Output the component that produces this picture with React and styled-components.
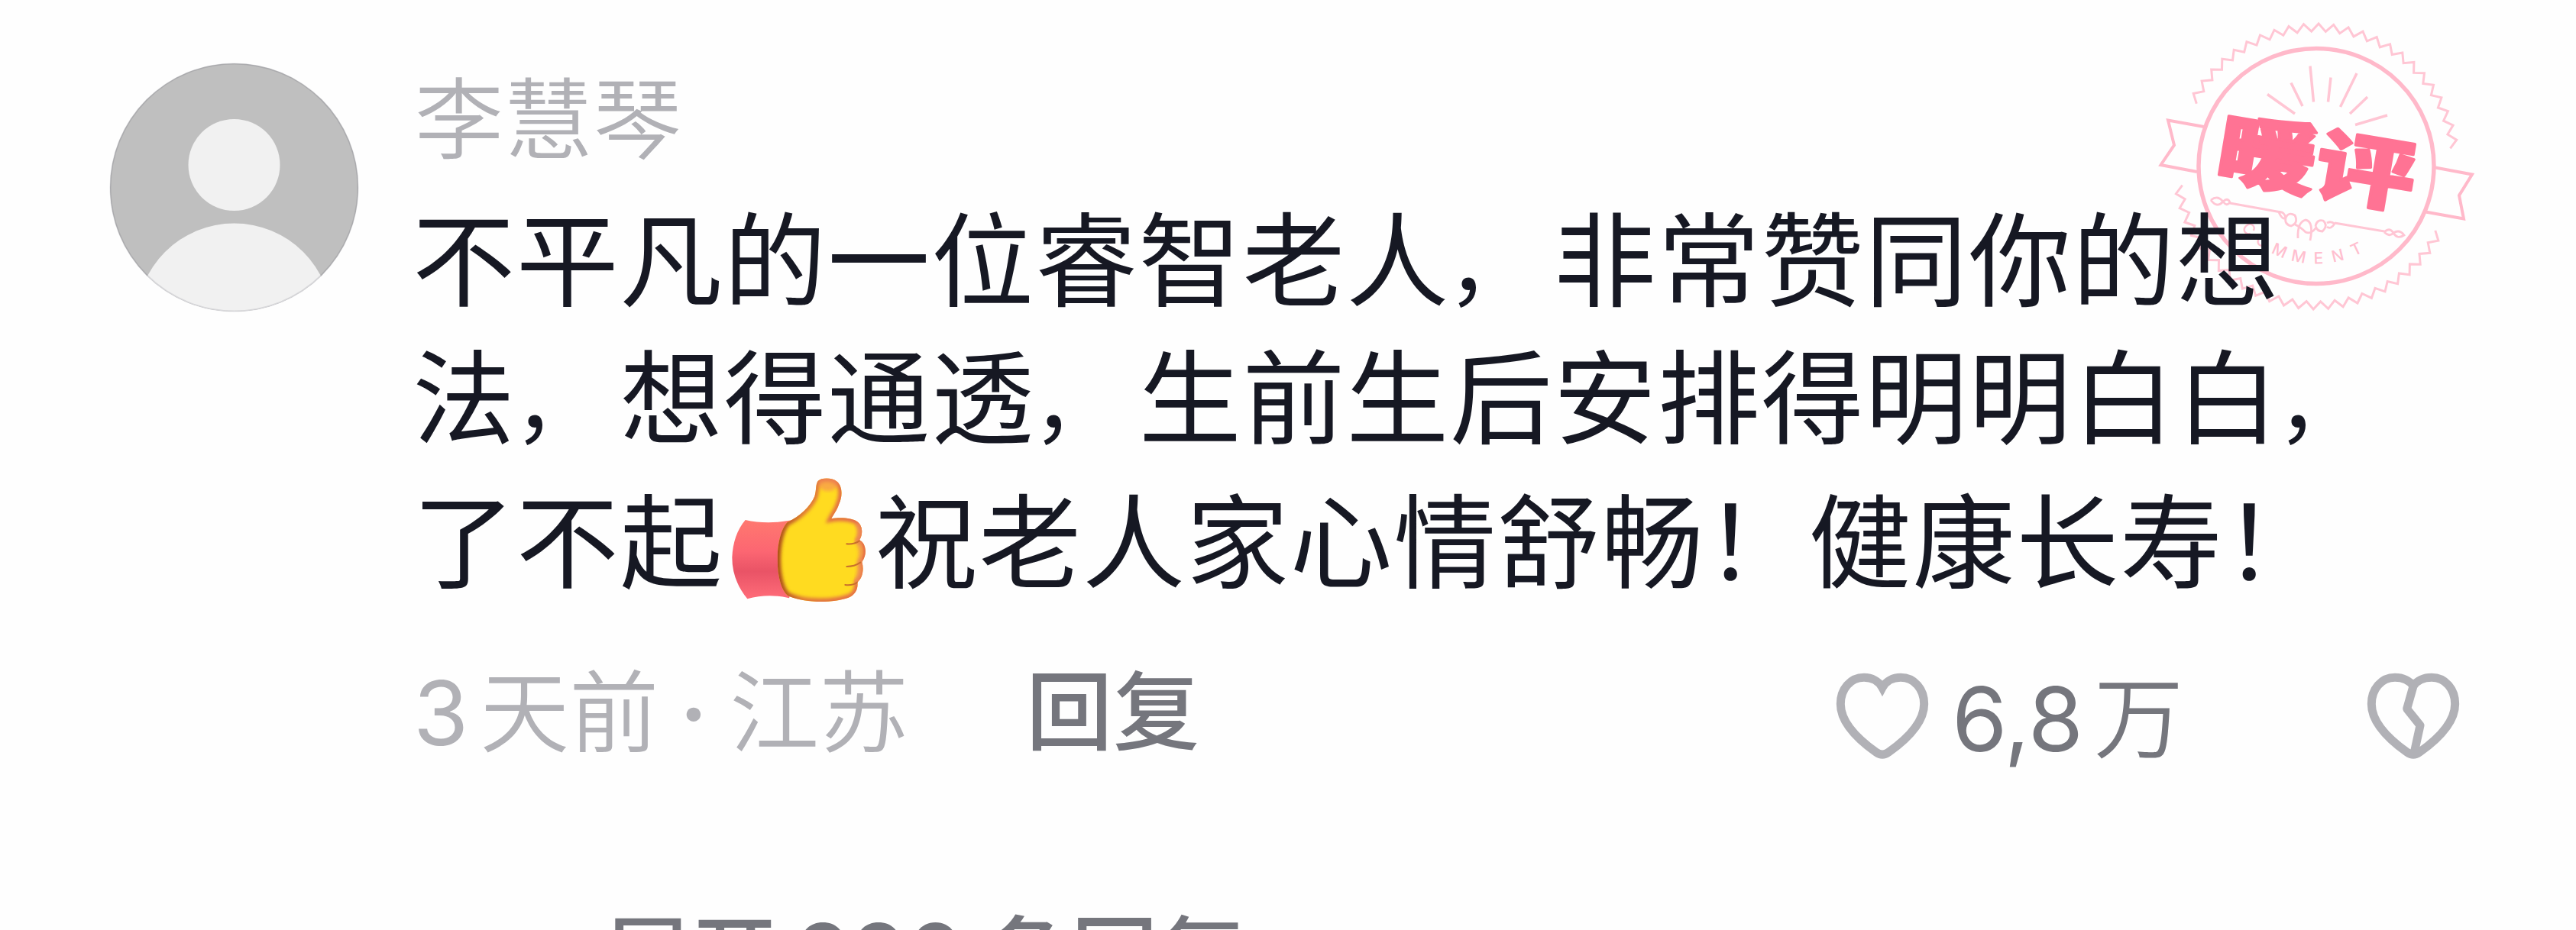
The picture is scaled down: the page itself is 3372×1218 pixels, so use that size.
import React from 'react';
import styled, { createGlobalStyle } from 'styled-components';

const GlobalStyle = createGlobalStyle`
  * { box-sizing: border-box; margin: 0; padding: 0; }
  body {
    background: #fefefe;
    overflow: hidden;
    font-family: Inter, 'Noto Sans CJK SC', sans-serif;
  }
`;

const Page = styled.main`
  position: relative;
  width: 3372px;
  height: 1218px;
  padding: 0 149px 0 143px;
  overflow: hidden;
`;

const Comment = styled.article`
  display: flex;
  gap: 70px;
`;

const Avatar = styled.svg`
  flex-shrink: 0;
  width: 327px;
  height: 327px;
  margin-top: 82px;
`;

const Content = styled.div`
  position: relative;
  flex: 1;
  padding-top: 92px;
`;

const UserName = styled.h3`
  padding-left: 3px;
  font-weight: 350;
  font-size: 116px;
  line-height: 130px;
  letter-spacing: 0.8px;
  color: #b1b1b6;
`;

const Message = styled.div`
  margin-top: 30px;
  color: #161823;
  font-size: 134px;
  font-weight: 400;
  letter-spacing: 1.8px;
`;

const Line = styled.p`
  display: flex;
  height: ${(p) => (p.$emoji ? 198 : 180)}px;
  line-height: ${(p) => (p.$emoji ? 198 : 180)}px;
  white-space: nowrap;
`;

const Comma = styled.span`
  transform: translateX(-4px) scale(0.86);
  transform-origin: 0 75%;
`;

const Thumb = styled.svg`
  width: 198px;
  height: 190px;
  margin-top: -1px;
`;

const Footer = styled.footer`
  display: flex;
  justify-content: space-between;
  margin-top: 59px;
  padding-left: 1px;
  font-size: 117px;
  line-height: 130px;
  white-space: nowrap;
`;

const Meta = styled.div`
  display: flex;
  font-weight: 350;
  color: #b1b1b6;
`;

const Num = styled.span`
  font-weight: 400;
`;

const Gap = styled.span`
  margin-left: ${(p) => p.$w}px;
`;

const Dot = styled.span`
  width: 34px;
  margin: 0 32px 0 27px;
  text-align: center;
  font-weight: 600;
`;

const ReplyBtn = styled.button`
  align-self: flex-start;
  margin-left: 154px;
  border: none;
  background: none;
  font: inherit;
  font-size: 113px;
  font-weight: 500;
  line-height: 126px;
  letter-spacing: 1px;
  color: #75767d;
`;

const Actions = styled.div`
  display: flex;
  align-items: center;
  height: 130px;
  margin-top: 8px;
`;

const HeartIcon = styled.svg`
  width: 128px;
  height: 128px;
  fill: none;
  stroke: #b1b1b6;
  stroke-width: 33;
`;

const Count = styled.span`
  display: flex;
  width: 567px;
  padding-left: 27px;
  font-weight: 350;
  color: #75767d;
`;

const Expand = styled.div`
  display: flex;
  margin: 180px 0 0 647px;
  font-size: 113px;
  font-weight: 500;
  line-height: 130px;
  letter-spacing: 2px;
  color: #75767d;
  white-space: nowrap;
`;

const ExpandNum = styled.span`
  margin: 0 25px 0 21px;
  font-size: 118px;
  letter-spacing: 0;
`;

// the stamp lies under the comment text
const StampBox = styled.svg`
  position: absolute;
  top: 10px;
  left: 2800px;
  width: 460px;
  height: 420px;
`;

const StampTitle = styled.text`
  font-size: 128px;
  font-weight: 900;
  fill: #ff7394;
  stroke: #ff7394;
  stroke-width: 4;
  stroke-linejoin: round;
`;

const StampLetter = styled.text`
  font-size: 21px;
  font-weight: 500;
  fill: #ffbfcf;
`;

// zigzag arc made of teeth between two radii
const zigzag = (from, to, teeth) => {
  const step = (to - from) / (teeth * 2);
  const points = [];
  for (let i = 0; i <= teeth * 2; i++) {
    const a = ((from + step * i) * Math.PI) / 180;
    const r = i % 2 ? 187 : 177;
    points.push(`${(232 + r * Math.cos(a)).toFixed(1)},${(208 + r * Math.sin(a)).toFixed(1)}`);
  }
  return points.join(' ');
};

const letters = [
  ['C', 137], ['O', 125.5], ['M', 113.5], ['M', 101], ['E', 88.6], ['N', 76.6], ['T', 64.2],
];

const FIST =
  'M305 222 C355 198 395 160 412 120 C420 95 415 75 425 60 C440 46 480 46 500 62 C522 80 522 120 508 150 C500 175 487 190 478 208 C510 202 560 204 580 220 C602 236 602 270 588 292 C612 302 622 345 598 378 C606 405 602 440 580 458 C584 485 570 508 545 518 C480 540 380 540 310 512 C255 480 250 280 305 222 Z';

function Stamp() {
  return (
    <StampBox viewBox="0 0 460 420">
      <g fill="none" stroke="#ffc6d4" strokeWidth="3">
        <polyline points={zigzag(207.7, 352.3, 24)} />
        <polyline points={zigzag(28.3, 172, 24)} />
        <circle cx="232" cy="207.5" r="154" stroke="#ffb9ca" strokeWidth="5.5" />
        <path stroke="#ffb9ca" strokeWidth="4" d="M85 156 L38 147.5 L46 180 L28.5 206 L76 215" />
        <path stroke="#ffb9ca" strokeWidth="4" d="M388 209.5 L436 218.5 L419 246 L425 276.5 L375 267.5" />
        <path
          strokeWidth="3.5"
          d="M168 113.5L204 139M199 98.5L214 129M224 76.5L228.5 123.5M251 91.5L247.5 123.5M285 86L263.5 130M299 117L276 139M325 141L283 153.5"
        />
        <g strokeWidth="2.8">
          <path d="M94 252 Q103 245 110 254 Q102 263 94 252 M110 254 Q116 248 119 255 Q115 261 110 254 M119 256 L186 268" />
          <path d="M183 268 Q189 266 192 275 Q188 279 183 268 M192 275 Q196 267 204 272 Q209 282 199 286 Q190 284 192 275" />
          <path d="M208 302 Q207 281 218 278 Q229 280 224 305 M204 284 Q211 287 218 294 Q225 297 231 289" />
          <path d="M231 286 Q233 277 241 279 Q248 285 240 293 Q233 293 231 286 M246 282 Q251 279 256 283 Q251 291 246 287 M256 282 L321 293" />
          <path d="M321 294 Q328 287 333 295 Q328 301 321 294 M333 295 Q341 290 347 298 Q338 304 333 295" />
        </g>
      </g>
      <g transform="translate(232 204) rotate(9.5) scale(1.02 0.8)">
        <StampTitle textAnchor="middle" y="46">暖评</StampTitle>
      </g>
      {letters.map(([ch, deg], i) => (
        <g key={i} transform={`translate(232 207.5) rotate(${deg - 90})`}>
          <StampLetter textAnchor="middle" y="128">{ch}</StampLetter>
        </g>
      ))}
    </StampBox>
  );
}

function ThumbUp() {
  return (
    <Thumb viewBox="54 3 594 570">
      <defs>
        <linearGradient id="sleeve" x1="0" y1="0" x2="0" y2="1">
          <stop offset="0" stopColor="#ff786f" />
          <stop offset="0.4" stopColor="#fc6672" />
          <stop offset="0.65" stopColor="#e95366" />
          <stop offset="1" stopColor="#ff6c79" />
        </linearGradient>
        <linearGradient id="edge" x1="0" y1="0" x2="1" y2="0">
          <stop offset="0" stopColor="#a94a18" />
          <stop offset="0.3" stopColor="#e07a38" />
          <stop offset="1" stopColor="#e66a4c" />
        </linearGradient>
        <clipPath id="fist">
          <path d={FIST} />
        </clipPath>
        <filter id="soft" x="-10%" y="-10%" width="120%" height="120%">
          <feGaussianBlur stdDeviation="7" />
        </filter>
      </defs>
      <path
        fill="url(#sleeve)"
        d="M140 213 Q225 232 322 214 L350 400 L312 520 Q230 500 148 523 Q88 450 88 360 Q92 270 140 213 Z"
      />
      <g clipPath="url(#fist)">
        <rect x="240" y="30" width="390" height="520" fill="#ffdb20" />
        <path filter="url(#soft)" fill="none" stroke="url(#edge)" strokeWidth="26" d={FIST} />
        <ellipse cx="465" cy="66" rx="40" ry="34" fill="#f58a5a" opacity="0.6" filter="url(#soft)" />
        <path
          filter="url(#soft)"
          fill="none"
          stroke="#ef8f58"
          strokeWidth="22"
          opacity="0.7"
          d="M580 225 Q600 260 582 295 Q608 340 588 382 Q596 430 572 462"
        />
        <path
          fill="none"
          stroke="#c9702c"
          strokeWidth="6"
          strokeLinecap="round"
          d="M538 307 Q565 310 588 295 M538 396 Q568 396 592 380 M532 468 Q560 472 580 458"
        />
      </g>
    </Thumb>
  );
}

export default function App() {
  return (
    <Page>
      <GlobalStyle />
      <Stamp />
      <Comment>
        <Avatar viewBox="0 0 327 327">
          <defs>
            <clipPath id="round">
              <circle cx="163.5" cy="163.5" r="162.5" />
            </clipPath>
          </defs>
          <g clipPath="url(#round)">
            <rect width="327" height="327" fill="#bfbfbf" />
            <circle cx="163.5" cy="134" r="60" fill="#f1f1f1" />
            <circle cx="163.5" cy="338.5" r="128" fill="#f1f1f1" />
          </g>
          <circle cx="163.5" cy="163.5" r="162" fill="none" stroke="#00001a" strokeOpacity="0.1" strokeWidth="2" />
        </Avatar>
        <Content>
          <UserName>李慧琴</UserName>
          <Message>
            <Line>
              不平凡的一位睿智老人<Comma>，</Comma>非常赞同你的想
            </Line>
            <Line>
              法<Comma>，</Comma>想得通透<Comma>，</Comma>生前生后安排得明明白白<Comma>，</Comma>
            </Line>
            <Line $emoji>
              了不起
              <ThumbUp />
              祝老人家心情舒畅！健康长寿！
            </Line>
          </Message>
          <Footer>
            <Meta>
              <Num>3</Num>
              <Gap $w={15}>天前</Gap>
              <Dot>·</Dot>
              <span>江苏</span>
              <ReplyBtn>回复</ReplyBtn>
            </Meta>
            <Actions>
              <HeartIcon viewBox="60 54 384 384">
                <path d="M252 122 C238 96 210 82 180 82 C126 82 88 128 88 186 C88 258 152 322 228 376 Q252 393 276 376 C352 322 416 258 416 186 C416 128 378 82 324 82 C294 82 266 96 252 122 Z" />
              </HeartIcon>
              <Count>
                <Num>6,8</Num>
                <Gap $w={14}>万</Gap>
              </Count>
              <HeartIcon viewBox="60 54 384 384" strokeLinejoin="round">
                <path d="M252 116 C238 94 210 82 180 82 C126 82 88 128 88 186 C88 258 152 322 228 376 Q252 393 276 376 C352 322 416 258 416 186 C416 128 378 82 324 82 C294 82 266 94 252 116 L227 205 L279 270 L255 380" />
              </HeartIcon>
            </Actions>
          </Footer>
        </Content>
      </Comment>
      <Expand>
        展开<ExpandNum>220</ExpandNum>条回复
      </Expand>
    </Page>
  );
}
